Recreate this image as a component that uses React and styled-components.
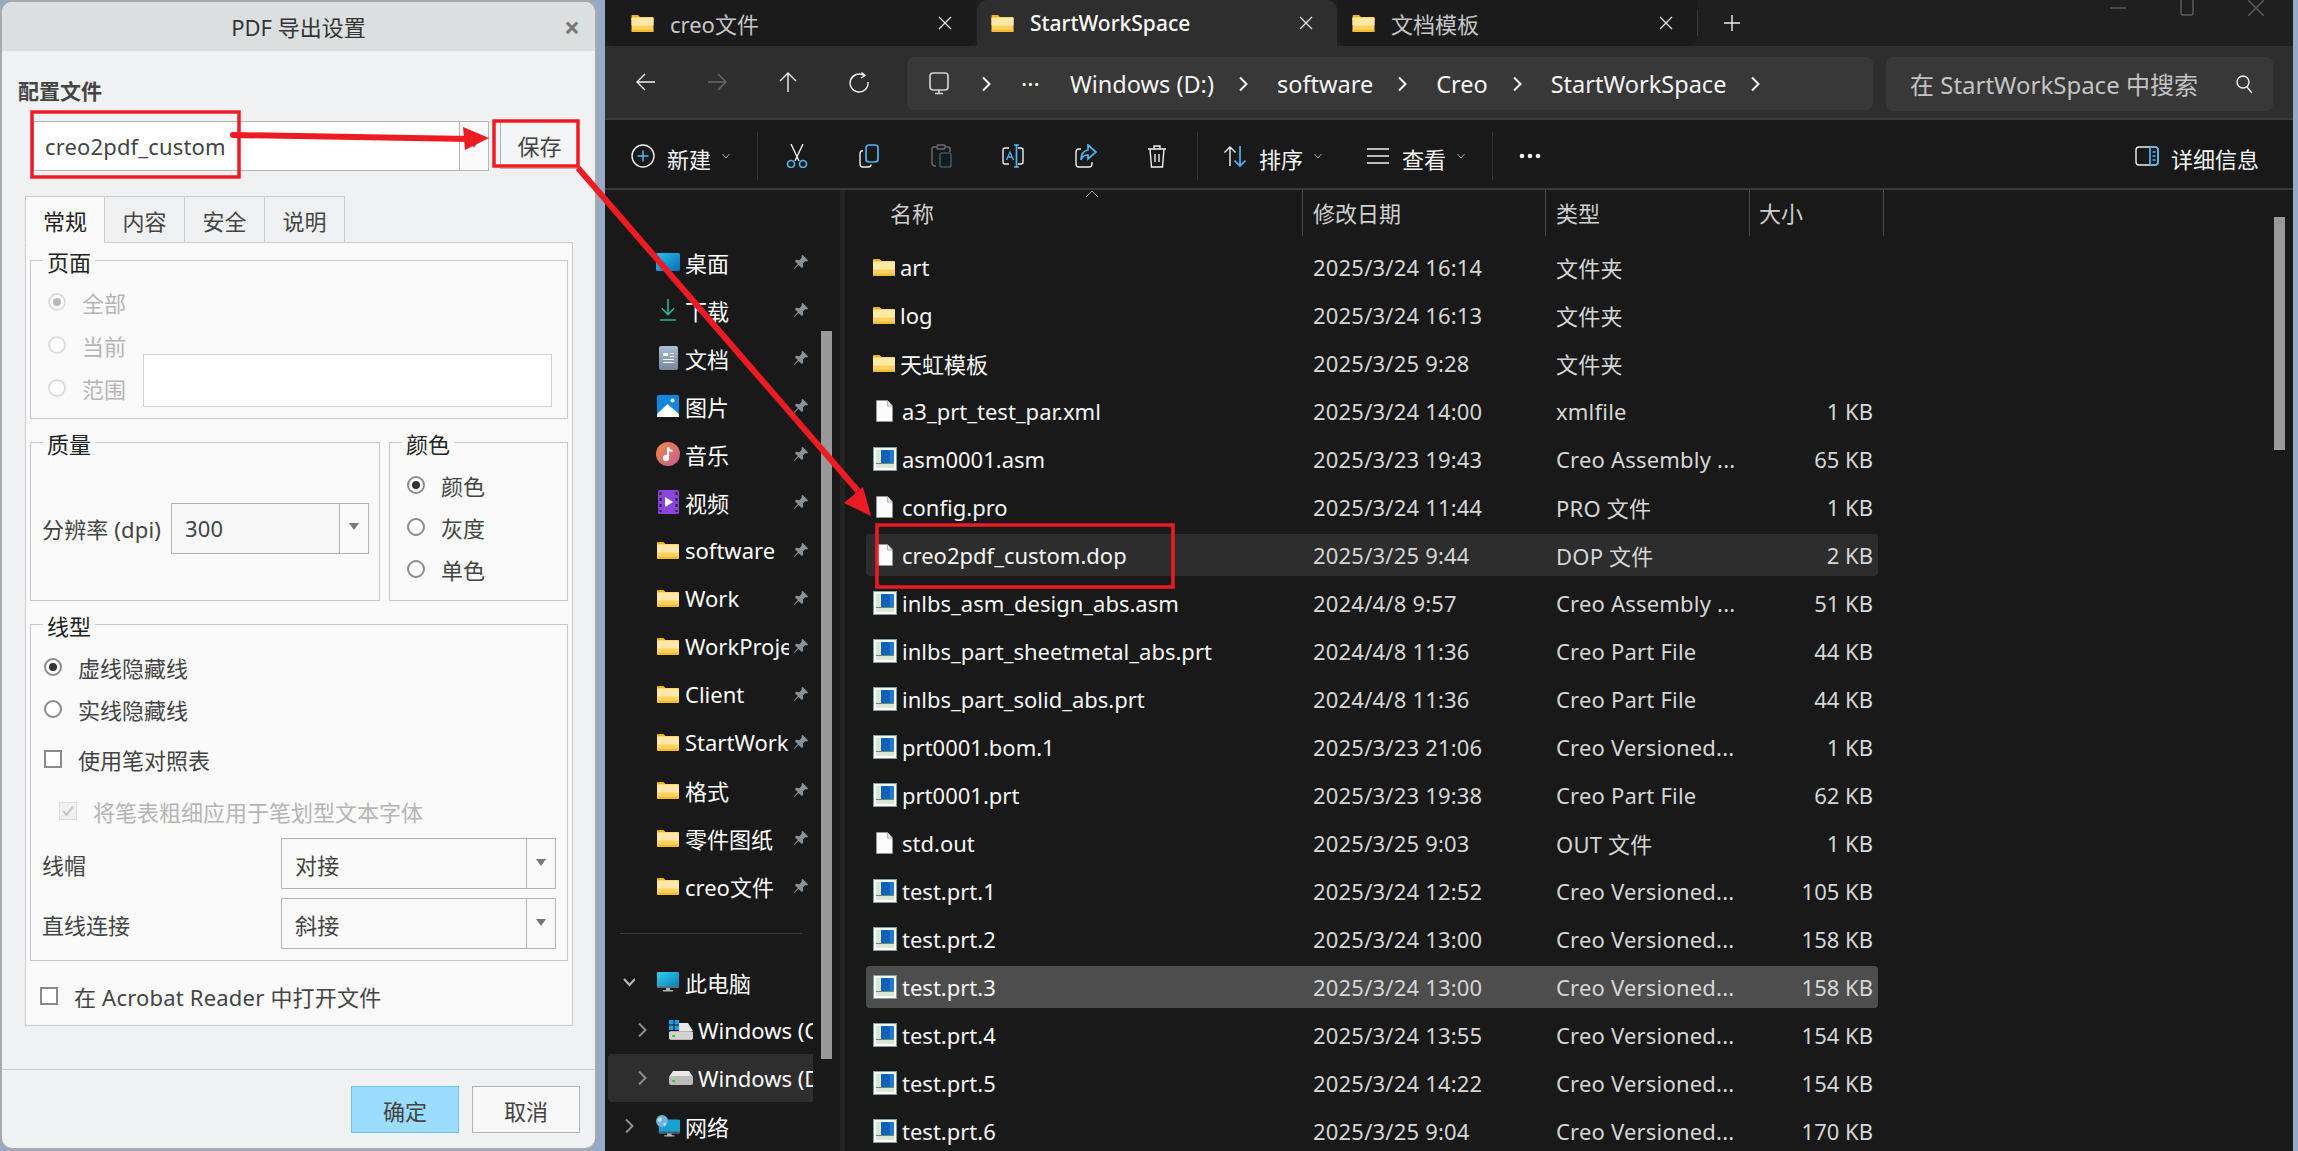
import React from 'react';
import styled, { createGlobalStyle } from 'styled-components';

const Global = createGlobalStyle`
  html, body { margin: 0; padding: 0; background: #96a9c7; }
  * { box-sizing: border-box; }
  body { font-family: "Noto Sans", "Noto Sans CJK SC", sans-serif; }
`;

const Page = styled.div`
  position: relative; display: flex; width: 2298px; height: 1151px; overflow: hidden; background: #96a9c7;
`;

/* ---------- dialog ---------- */
const Dialog = styled.div`
  width: 597px; height: 1150px; flex: none; margin-right: 8px; display: flex; flex-direction: column;
  background: #f0f1f3; border: 2px solid #a9a9a9; border-radius: 12px; color: #444; font-size: 22px; overflow: hidden;
`;
const TitleBar = styled.div`
  height: 49px; flex: none; background: #dcdfe0; display: grid; grid-template-columns: 1fr auto 1fr; align-items: center; color: #333;
`;
const Title = styled.div`grid-column: 2; font-size: 22px; line-height: 1;`;
const TitleClose = styled.div`justify-self: end; margin-right: 15px; color: #777; font-size: 28px; font-weight: 700; line-height: 1;`;
const ProfileLabel = styled.div`margin: 28px 0 0 16px; height: 24px; line-height: 24px; font-weight: 700; font-size: 21px; color: #444;`;
const ProfileRow = styled.div`display: flex; margin: 18px 0 0 31px; height: 50px;`;
const Combo = styled.div`
  display: flex; flex: none; width: ${p => p.$w}px; height: ${p => p.$h || 51}px; border: 1px solid #b4b4b4; background: ${p => p.$bg || '#fafafa'};
`;
const ComboText = styled.div`flex: 1; display: flex; align-items: center; padding-left: ${p => p.$pad || 13}px; color: #444; letter-spacing: .15px;`;
const ComboBtn = styled.div`
  width: 29px; flex: none; border-left: 1px solid #b4b4b4; display: flex; align-items: center; justify-content: center; background: #fafafa;
  &::after { content: ""; border-left: 5px solid transparent; border-right: 5px solid transparent; border-top: 7px solid #777; margin-top: -3px; }
`;
const SaveBtn = styled.div`
  margin-left: 11px; width: 79px; height: 48px; border: 1px solid #b4b4b4; background: #f4f5f6; display: flex; align-items: center; justify-content: center; color: #444;
`;
const TabStrip = styled.div`display: flex; margin: 25px 0 0 23px; height: 47px;`;
const PanelTab = styled.div`
  width: 80px; display: flex; align-items: center; justify-content: center; border: 1px solid #ccc; border-left-width: 0; color: ${p => p.$active ? '#222' : '#444'};
  background: ${p => p.$active ? '#fafafa' : '#eff0f2'}; border-bottom: ${p => p.$active ? '1px solid #fafafa' : '1px solid #ccc'}; position: relative; z-index: ${p => p.$active ? 1 : 0};
  &:first-child { border-left-width: 1px; }
`;
const Panel = styled.div`
  width: 548px; height: 784px; margin: -1px 0 0 23px; border: 1px solid #ccc; background: #fafafa; padding: 17px 4px 0; display: flex; flex-direction: column;
`;
const Group = styled.div`
  position: relative; flex: none; width: ${p => p.$w || 538}px; height: ${p => p.$h}px; border: 1px solid #c6c9ce; margin-top: ${p => p.$top || 0}px;
`;
const Legend = styled.div`
  position: absolute; top: -13px; left: 12px; padding: 0 4px; line-height: 28px; background: #fafafa; color: #222;
`;
const GroupRow = styled.div`display: flex; gap: 9px; margin-top: 23px;`;
const PageGrid = styled.div`
  display: grid; grid-template-columns: 95px 1fr; grid-auto-rows: 42px; row-gap: 1px; padding: 20px 15px 0 17px;
`;
const RangeField = styled.div`
  grid-column: 2; grid-row: 2 / 4; align-self: end; height: 53px; margin-bottom: 2px; background: #fff; border: 1px solid #d2d2d2;
`;
const OptionRow = styled.label`
  display: flex; align-items: center; height: 42px; margin-top: ${p => p.$top || 0}px; padding-left: ${p => p.$pad || 0}px; gap: 16px;
  color: ${p => p.$disabled ? '#b5b5b5' : '#444'}; white-space: nowrap; grid-column: 1;
`;
const RadioDot = styled.span`
  width: 18px; height: 18px; flex: none; border-radius: 50%; background: #fff; border: 2px solid ${p => p.$disabled ? '#dcdcdc' : '#8a8a8a'};
  display: flex; align-items: center; justify-content: center;
  &::after { content: ""; width: 8px; height: 8px; border-radius: 50%; background: ${p => p.$checked ? (p.$disabled ? '#b9b9b9' : '#333') : 'transparent'}; }
`;
const CheckBox = styled.span`
  width: 18px; height: 18px; flex: none; background: ${p => p.$disabled ? '#f0f0f0' : '#fff'}; border: ${p => p.$disabled ? '1px solid #ddd' : '2px solid #8a8a8a'};
  display: flex; align-items: center; justify-content: center;
`;
const QualityRow = styled.div`display: flex; align-items: center; height: 100%; padding: 13px 0 0 11px; gap: 8px;`;
const QualityLabel = styled.span`width: 121px; white-space: nowrap; letter-spacing: .15px;`;
const ColorList = styled.div`padding: 21px 0 0 17px;`;
const LineList = styled.div`padding: 21px 0 0 13px;`;
const StrokeRow = styled.div`
  display: flex; align-items: center; justify-content: space-between; height: 51px; margin: ${p => p.$top}px 0 0 -2px; padding-right: 11px;
`;
const AcrobatRow = styled(OptionRow)`margin-top: 14px; gap: 16px; padding-left: 10px; letter-spacing: .2px;`;
const DialogFooter = styled.div`
  margin-top: auto; height: 79px; flex: none; margin-bottom: 0; border-top: 1px solid #ccc; display: flex; justify-content: flex-end; gap: 13px; padding: 16px 15px 0 0;
`;
const FootBtn = styled.div`
  width: 108px; height: 47px; display: flex; align-items: center; justify-content: center; color: #444;
  background: ${p => p.$primary ? '#9bdcff' : '#f8f8f8'}; border: 1px solid ${p => p.$primary ? '#6cc4ef' : '#b4b4b4'};
`;

/* ---------- explorer ---------- */
const Explorer = styled.div`
  width: 1688px; flex: none; height: 1151px; display: flex; flex-direction: column; background: #191919; color: #fff; font-size: 22px;
`;
const TabBar = styled.div`height: 46px; flex: none; display: flex; background: #1f1f1f; align-items: stretch;`;
const WinTab = styled.div`
  width: ${p => p.$w}px; flex: none; display: flex; align-items: center; padding-left: 14px; padding-right: 24px; margin-right: 1px;
  background: ${p => p.$active ? '#2e2e2e' : '#1b1b1b'}; color: ${p => p.$active ? '#fff' : '#c6c6c6'}; font-weight: ${p => p.$active ? 500 : 400};
  font-size: ${p => p.$active ? 21 : 22}px; border-radius: ${p => p.$active ? '10px 10px 0 0' : '0 0 10px 10px'};
  &:first-child { padding-left: 26px; }
`;
const TabLabel = styled.span`margin: -1px 0 0 16px; white-space: nowrap;`;
const TabClose = styled.span`margin-left: auto; display: flex; color: #e6e6e6;`;
const NewTab = styled.div`
  display: flex; align-items: center; margin: 10px 0 10px -1px; border-left: 1px solid #3a3a3a; padding-left: 26px; color: #eee;
`;
const WinControls = styled.div`display: flex; margin-left: auto; align-items: flex-start; color: #5e5e5e; padding-right: 29px; gap: 53px;`;
const NavBar = styled.div`
  height: 74px; flex: none; background: #2e2e2e; border-bottom: 2px solid #3a3a3a; display: flex; align-items: center; padding: 3px 0 0 5px; font-size: 23.5px;
`;
const NavBtn = styled.div`width: 71px; flex: none; display: flex; justify-content: center; margin-top: -3px; color: ${p => p.$dim ? '#6a6a6a' : '#f2f2f2'};`;
const Address = styled.div`
  width: 966px; height: 53px; flex: none; margin-left: 13px; background: #383838; border-radius: 7px; display: flex; align-items: center; padding-left: 20px; color: #fff;
`;
const Crumb = styled.span`white-space: nowrap; color: #f5f5f5; margin-right: ${p => p.$r || 0}px;`;
const CrumbSep = styled.span`display: flex; width: 12px; flex: none; margin: 0 ${p => p.$r || 28}px 0 ${p => p.$l || 23}px; color: #f0f0f0;`;
const SearchBox = styled.div`
  width: 387px; height: 54px; flex: none; margin-left: 13px; background: #383838; border-radius: 7px; display: flex; align-items: center; padding: 0 20px 0 24px; color: #c4c4c4; white-space: nowrap; font-size: 24px;
`;
const SearchIconWrap = styled.span`margin-left: auto; display: flex; color: #d0d0d0;`;
const Toolbar = styled.div`
  height: 70px; flex: none; border-bottom: 2px solid #3a3a3a; display: flex; align-items: center; padding: 3px 34px 0 26px; background: #191919;
`;
const ToolText = styled.span`white-space: nowrap; margin: 4px 0 0 12px; color: #f4f4f4;`;
const ToolIcon = styled.span`display: flex; width: 24px; flex: none; margin-left: ${p => p.$l || 0}px;`;
const Caret = styled.span`display: flex; margin-left: 11px; color: #aaa;`;
const ToolSep = styled.span`width: 1px; height: 48px; flex: none; background: #333; margin: 0 ${p => p.$r || 0}px 0 ${p => p.$l || 0}px;`;
const ToolBtn = styled.span`width: 72px; flex: none; display: flex; justify-content: center; opacity: ${p => p.$dim ? 0.4 : 1};`;
const DetailsBtn = styled.div`margin-left: auto; display: flex; align-items: center;`;
const Body = styled.div`flex: 1; min-height: 0; display: flex; overflow: hidden;`;
const Sidebar = styled.div`position: relative; width: 235px; flex: none; padding-top: 48px; background: #191919;`;
const SideScroll = styled.div`position: absolute; left: 216px; top: 141px; width: 11px; height: 728px; background: #999;`;
const Splitter = styled.div`width: 5px; flex: none; background: #232323;`;
const SideItem = styled.div`display: flex; align-items: center; height: 48px; padding-left: 51px; gap: 5px;`;
const SideIcon = styled.span`display: flex; width: 24px; flex: none; justify-content: center;`;
const SideLabel = styled.span`width: 104px; overflow: hidden; white-space: nowrap; flex: none;`;
const SidePin = styled.span`display: flex; margin-left: -1px;`;
const SideDivider = styled.div`height: 1px; width: 182px; margin: 23px 0 24px 15px; background: #3c3c3c;`;
const TreeItem = styled.div`
  display: flex; align-items: center; height: 48px; width: 205px; margin-left: 3px; padding-left: ${p => p.$pad}px; overflow: hidden; white-space: nowrap;
  background: ${p => p.$selected ? '#2e2e2e' : 'transparent'}; border-radius: 4px 0 0 4px;
`;
const TreeChevron = styled.span`display: flex; width: 14px; flex: none; margin-right: 19px; color: ${p => p.$open ? '#bdbdbd' : '#8e8e8e'};`;
const TreeLabel = styled.span`margin-left: 5px;`;
const Main = styled.div`flex: 1; min-width: 0; display: flex; flex-direction: column; position: relative;`;
const HeaderRow = styled.div`display: flex; height: 46px; flex: none; color: #cfcfcf;`;
const HeadCell = styled.div`
  width: ${p => p.$w}px; flex: none; padding-left: ${p => p.$pad}px; padding-bottom: 3px; display: flex; align-items: center; border-right: 1px solid #4a4a4a; position: relative;
`;
const SortMark = styled.span`position: absolute; left: 240px; top: 0; display: flex; color: #aaa;`;
const Rows = styled.div`display: flex; flex-direction: column; padding: 10px 0 0 21px; gap: 6px;`;
const FileRow = styled.div`
  display: grid; grid-template-columns: 447px 243px 204px 1fr; flex: none; width: 1012px; height: 42px; align-items: center; border-radius: 4px;
  background: ${p => p.$hl === 'strong' ? '#4d4d4d' : p.$hl ? '#2d2d2d' : 'transparent'};
`;
const NameCell = styled.div`display: flex; align-items: center; gap: 5px; padding-left: 7px; color: #f6f6f6; white-space: nowrap;`;
const MetaCell = styled.div`color: #d6d6d6; white-space: nowrap; letter-spacing: .2px;`;
const SizeCell = styled.div`color: #d6d6d6; text-align: right; padding-right: 5px; white-space: nowrap;`;
const MainScroll = styled.div`position: absolute; left: 1429px; top: 27px; width: 11px; height: 233px; background: #999;`;
const Overlay = styled.svg`position: absolute; left: 0; top: 0; pointer-events: none;`;

/* ---------- icons ---------- */
const FolderIcon = ({ w = 22, h = 17 }) => (
  <svg width={w} height={h} viewBox="0 0 22 17">
    <path d="M0 1.2C0 .5.5 0 1.2 0h5.3l2 2H21a1 1 0 0 1 1 1v2H0z" fill="#f4b400" />
    <rect x="0" y="2.6" width="22" height="14.4" rx="1" fill="#fbd25f" />
    <rect x="0" y="2.6" width="22" height="8" rx="1" fill="#ffe9a8" />
    <rect x="0" y="14.8" width="22" height="2.2" rx="1" fill="#f3bb32" />
  </svg>
);
const DocIcon = () => (
  <svg width="24" height="22" viewBox="0 0 24 22">
    <path d="M3.5.5h11l5 5.5v15.5h-16z" fill="#fcfcfc" stroke="#9a9a9a" strokeWidth=".7" />
    <path d="M14.5.5v5.5h5" fill="#e4e4e4" stroke="#9a9a9a" strokeWidth=".7" />
  </svg>
);
const CreoIcon = () => (
  <svg width="24" height="24" viewBox="0 0 24 24">
    <rect x=".5" y=".5" width="23" height="23" fill="#fff" stroke="#7d9fa8" />
    <path d="M3 3h5v13h13v5H3z" fill="#dbe7d2" />
    <rect x="8" y="3" width="13" height="13" fill="#0e63b7" />
    <rect x="17" y="3" width="4" height="13" fill="#3b8ad6" opacity=".6" />
    <rect x="3" y="16" width="18" height="1" fill="#6a8a76" />
  </svg>
);
const Pin = () => (
  <svg width="16" height="16" viewBox="0 0 16 16" fill="#89909a">
    <path d="M9.6 .8 15.2 6.4 13.9 7.6 12.6 7 9.8 9.8 10.2 12.7 8.8 14.1 5.4 10.7 1.6 15 .9 14.3 4.8 10.1 1.7 7.1 3.1 5.7 6.2 6.2 8.9 3.4 8.4 2z" />
  </svg>
);
const DesktopIcon = () => (
  <svg width="24" height="18" viewBox="0 0 24 18">
    <defs><linearGradient id="dsk" x1="0" y1="0" x2="1" y2="1"><stop offset="0" stopColor="#25c0ee" /><stop offset="1" stopColor="#0e6cb2" /></linearGradient></defs>
    <rect width="24" height="18" rx="1.5" fill="url(#dsk)" />
  </svg>
);
const DownloadIcon = () => (
  <svg width="18" height="22" viewBox="0 0 18 22" fill="none" stroke="#22b796" strokeWidth="1.6">
    <path d="M9 0v15M3 9.5 9 15.5l6-6M1 21h16" />
  </svg>
);
const DocsIcon = () => (
  <svg width="19" height="24" viewBox="0 0 19 24">
    <defs><linearGradient id="dcs" x1="0" y1="0" x2="0" y2="1"><stop offset="0" stopColor="#a9bdd6" /><stop offset="1" stopColor="#76879d" /></linearGradient></defs>
    <rect width="19" height="24" rx="2" fill="url(#dcs)" />
    <path d="M4 7h5v3H4zM11 7h4v1h-4zM11 10h4v1h-4zM4 13h11v1H4zM4 16h11v1H4z" fill="#fff" />
  </svg>
);
const PicIcon = () => (
  <svg width="22" height="22" viewBox="0 0 22 22">
    <rect width="22" height="22" rx="1.5" fill="#0f86e2" />
    <circle cx="15.5" cy="5.5" r="2" fill="#fff" />
    <path d="M0 19 10.5 9 22 19v3H0z" fill="#fff" />
  </svg>
);
const MusicIcon = () => (
  <svg width="24" height="24" viewBox="0 0 24 24">
    <defs><linearGradient id="mus" x1="0" y1="0" x2="1" y2="1"><stop offset="0" stopColor="#f08a3c" /><stop offset="1" stopColor="#c85a9a" /></linearGradient></defs>
    <circle cx="12" cy="12" r="12" fill="url(#mus)" />
    <path d="M11 5h2.2c.4 2 1.9 2.7 3.3 3v2c-1.4 0-2.5-.5-3.3-1.200V16a3.200 3.200 0 1 1-2.200-3z" fill="#fff" />
  </svg>
);
const VideoIcon = () => (
  <svg width="21" height="24" viewBox="0 0 21 24">
    <rect width="21" height="24" rx="1.5" fill="#8a46d8" />
    <path d="M1.500 2h2v3h-2zM1.500 8h2v3h-2zM1.500 14h2v3h-2zM1.500 20h2v2h-2zM17.500 2h2v3h-2zM17.500 8h2v3h-2zM17.500 14h2v3h-2zM17.500 20h2v2h-2z" fill="#2a1a4a" />
    <path d="M7 7 15 12 7 17z" fill="#fff" />
  </svg>
);
const PcIcon = () => (
  <svg width="22" height="20" viewBox="0 0 22 20">
    <defs><linearGradient id="pc" x1="0" y1="0" x2="1" y2="1"><stop offset="0" stopColor="#2fd0ec" /><stop offset="1" stopColor="#0f78b8" /></linearGradient></defs>
    <rect width="22" height="16" rx="1" fill="url(#pc)" />
    <rect y="14.500" width="22" height="1.500" fill="#5d6a74" />
    <path d="M9 16h4v2h3v1.500H6V18h3z" fill="#aab4bb" />
  </svg>
);
const NetIcon = () => (
  <svg width="26" height="24" viewBox="0 0 26 24">
    <rect x="3" y="5" width="23" height="15" rx="1" fill="#17a2cf" />
    <rect x="3" y="18" width="23" height="2" fill="#4c5a66" />
    <path d="M12 20h5v2h3v1.500H9V22h3z" fill="#aab4bb" />
    <circle cx="6.500" cy="6.500" r="6.500" fill="#6db3e6" />
    <path d="M3 3c3-1 4 1 3 3S3 8 2 6zM8 9c2-1 3 0 3 1l-2 2z" fill="#cfe7c9" />
  </svg>
);
const DriveC = () => (
  <svg width="24" height="20" viewBox="0 0 24 20">
    <path d="M10 3h9l5 8H10z" fill="#e6e6e6" />
    <rect y="11" width="24" height="9" rx="2" fill="#b5b5b5" />
    <rect y="12" width="24" height="7" fill="#d2d2d2" />
    <rect x="3" y="15" width="3" height="2" fill="#2fd04a" />
    <path d="M0 0h4.500v4.500H0zM5.500 0H10v4.500H5.500zM0 5.500h4.500V10H0zM5.500 5.500H10V10H5.500z" fill="#1f9be8" />
  </svg>
);
const DriveD = () => (
  <svg width="24" height="14" viewBox="0 0 24 14">
    <path d="M4 0h16l4 6H0z" fill="#e8e8e8" />
    <rect y="5" width="24" height="9" rx="2" fill="#bcbcbc" />
    <rect x="3" y="9" width="3" height="2" fill="#2fd04a" />
  </svg>
);
const Chev = ({ dir = 'right', size = 12, sw = 2 }) => (
  <svg width={size} height={size + 4} viewBox="0 0 12 16" fill="none" stroke="currentColor" strokeWidth={sw}>
    {dir === 'right' ? <path d="M3 1.500 9.500 8 3 14.500" /> : <path d="M1 5l5.500 6L12 5" />}
  </svg>
);
const SmallCaret = () => (
  <svg width="8" height="6" viewBox="0 0 8 6" fill="none" stroke="currentColor" strokeWidth="1"><path d="M.5 1 4 5l3.500-4" /></svg>
);
const XMark = ({ s = 14 }) => (
  <svg width={s} height={s} viewBox="0 0 14 14" stroke="currentColor" strokeWidth="1.300" fill="none"><path d="M1 1l12 12M13 1 1 13" /></svg>
);
const Stroke = ({ w = 24, h = 24, vb = '0 0 24 24', children, color = '#f0f0f0', sw = 1.400 }) => (
  <svg width={w} height={h} viewBox={vb} fill="none" stroke={color} strokeWidth={sw}>{children}</svg>
);
const BLUE = '#4db5f0';
const BackI = () => <Stroke><path d="M21 12H4M11 4l-8 8 8 8" /></Stroke>;
const FwdI = () => <Stroke color="currentColor"><path d="M3 12h17M13 4l8 8-8 8" /></Stroke>;
const UpI = () => <Stroke><path d="M12 22V4M4 11l8-8 8 8" /></Stroke>;
const RefreshI = () => <Stroke><path d="M17 5.500A9 9 0 1 0 21 12M14.500 2.500 18 5.500l-4 2.500" /></Stroke>;
const PcLine = () => <Stroke sw={1.700} color="#cfcfcf"><rect x="3" y="1" width="18" height="17" rx="3" /><path d="M8 21.500h8M12 18v3.500" /></Stroke>;
const SearchI = () => <Stroke w={18} h={20} vb="0 0 18 20"><circle cx="8" cy="8" r="6" /><path d="M12 13l5 6" /></Stroke>;
const NewI = () => (
  <Stroke><circle cx="12" cy="12" r="11" /><path d="M12 6.500v11M6.500 12h11" stroke={BLUE} strokeWidth="1.600" /></Stroke>
);
const CutI = () => (
  <Stroke><path d="M6 0l8 17M18 0l-8 17" /><circle cx="6" cy="20" r="3.500" stroke={BLUE} strokeWidth="1.700" /><circle cx="18" cy="20" r="3.500" stroke={BLUE} strokeWidth="1.700" /></Stroke>
);
const CopyI = () => (
  <Stroke><rect x="9" y="1" width="12" height="17" rx="3" stroke={BLUE} strokeWidth="1.700" /><path d="M6 6.500c-2 .3-3 1.500-3 3V20c0 2 1.500 3 3 3h5c2 0 3-1 3-2.500" /></Stroke>
);
const PasteI = () => (
  <Stroke><path d="M7 3H5a2 2 0 0 0-2 2v15a3 3 0 0 0 3 2h1M17 3h2a2 2 0 0 1 2 2v3" /><rect x="8" y="1" width="8" height="4" rx="1" /><rect x="11" y="9" width="11" height="14" rx="2" stroke={BLUE} strokeWidth="1.700" /></Stroke>
);
const RenameI = () => (
  <Stroke><path d="M8 4H4a2 2 0 0 0-2 2v12a2 2 0 0 0 2 2h4M17 4h3a2 2 0 0 1 2 2v12a2 2 0 0 1-2 2h-3" /><path d="M15.500 1v22M13 1h5M13 23h5" stroke={BLUE} strokeWidth="1.700" /><path d="M5.500 16l3.500-8 3.500 8M7 13h4" stroke={BLUE} strokeWidth="1.300" /></Stroke>
);
const ShareI = () => (
  <Stroke><path d="M8 5H6a3 3 0 0 0-3 3v12a3 3 0 0 0 3 3h10a3 3 0 0 0 3-3v-2" /><path d="M15 1l8 7-8 7v-4c-4 0-6 2-7 5 0-5 2-9 7-10z" stroke={BLUE} strokeWidth="1.700" /></Stroke>
);
const TrashI = () => (
  <Stroke><path d="M3 5h18M9 5V2h6v3M5 5l1.500 18h11L19 5M10 10v8M14 10v8" /></Stroke>
);
const SortI = () => (
  <Stroke><path d="M7 22V3M1.500 8.500 7 3l5.500 5.500" /><path d="M17 2v20M11.500 16.500 17 22l5.500-5.500" stroke={BLUE} strokeWidth="1.700" /></Stroke>
);
const ViewI = () => <Stroke><path d="M1 5h22M1 12h22M1 19h22" /></Stroke>;
const DotsI = () => <svg width="24" height="6" viewBox="0 0 24 6" fill="#f0f0f0"><circle cx="4" cy="3" r="2.300" /><circle cx="12" cy="3" r="2.300" /><circle cx="20" cy="3" r="2.300" /></svg>;
const DetailsI = () => (
  <Stroke h={20} vb="0 0 24 20"><rect x="1" y="1" width="22" height="18" rx="3" /><path d="M15 1h5a3 3 0 0 1 3 3v12a3 3 0 0 1-3 3h-5zM17.500 6h3M17.500 10h3M17.500 14h3" stroke={BLUE} strokeWidth="1.700" /></Stroke>
);
const TickI = () => <svg width="14" height="14" viewBox="0 0 14 14" fill="none" stroke="#c4c4c4" strokeWidth="2"><path d="M2 7l3.500 4L12 2.500" /></svg>;

/* ---------- data ---------- */
const quick = [
  ['桌面', <DesktopIcon />], ['下载', <DownloadIcon />], ['文档', <DocsIcon />], ['图片', <PicIcon />], ['音乐', <MusicIcon />], ['视频', <VideoIcon />],
  ['software', <FolderIcon />], ['Work', <FolderIcon />], ['WorkProject', <FolderIcon />], ['Client', <FolderIcon />], ['StartWorkSpace', <FolderIcon />],
  ['格式', <FolderIcon />], ['零件图纸', <FolderIcon />], ['creo文件', <FolderIcon />],
];
const ASM = 'Creo Assembly ...'; const VER = 'Creo Versioned...'; const PART = 'Creo Part File';
const files = [
  ['art', 'f', '2025/3/24 16:14', '文件夹', ''], ['log', 'f', '2025/3/24 16:13', '文件夹', ''], ['天虹模板', 'f', '2025/3/25 9:28', '文件夹', ''],
  ['a3_prt_test_par.xml', 'd', '2025/3/24 14:00', 'xmlfile', '1 KB'], ['asm0001.asm', 'c', '2025/3/23 19:43', ASM, '65 KB'],
  ['config.pro', 'd', '2025/3/24 11:44', 'PRO 文件', '1 KB'], ['creo2pdf_custom.dop', 'd', '2025/3/25 9:44', 'DOP 文件', '2 KB', 'soft'],
  ['inlbs_asm_design_abs.asm', 'c', '2024/4/8 9:57', ASM, '51 KB'], ['inlbs_part_sheetmetal_abs.prt', 'c', '2024/4/8 11:36', PART, '44 KB'],
  ['inlbs_part_solid_abs.prt', 'c', '2024/4/8 11:36', PART, '44 KB'], ['prt0001.bom.1', 'c', '2025/3/23 21:06', VER, '1 KB'],
  ['prt0001.prt', 'c', '2025/3/23 19:38', PART, '62 KB'], ['std.out', 'd', '2025/3/25 9:03', 'OUT 文件', '1 KB'],
  ['test.prt.1', 'c', '2025/3/24 12:52', VER, '105 KB'], ['test.prt.2', 'c', '2025/3/24 13:00', VER, '158 KB'],
  ['test.prt.3', 'c', '2025/3/24 13:00', VER, '158 KB', 'strong'], ['test.prt.4', 'c', '2025/3/24 13:55', VER, '154 KB'],
  ['test.prt.5', 'c', '2025/3/24 14:22', VER, '154 KB'], ['test.prt.6', 'c', '2025/3/25 9:04', VER, '170 KB'],
];
const fileIcon = { f: <FolderIcon />, d: <DocIcon />, c: <CreoIcon /> };

const Annotations = () => (
  <Overlay width="2298" height="1151" viewBox="0 0 2298 1151">
    <g fill="none" stroke="#ed1c24" strokeWidth="3.500">
      <rect x="32" y="112" width="207" height="65" />
      <rect x="494" y="121" width="84" height="45" />
      <rect x="877" y="525" width="296" height="62" />
    </g>
    <path d="M233 135 470 139" stroke="#ed1c24" strokeWidth="6" strokeLinecap="round" />
    <polygon points="489,138 463,127 465,150" fill="#ed1c24" />
    <path d="M578 168 858 491" stroke="#ed1c24" strokeWidth="6" />
    <polygon points="871,516 844,503 863,487" fill="#ed1c24" />
  </Overlay>
);

export default function App() {
  return (
    <Page>
      <Global />
      <Dialog>
        <TitleBar>
          <Title>PDF 导出设置</Title>
          <TitleClose>×</TitleClose>
        </TitleBar>
        <ProfileLabel>配置文件</ProfileLabel>
        <ProfileRow>
          <Combo $w={456} $h={50} $bg="#fff"><ComboText $pad={11}>creo2pdf_custom</ComboText><ComboBtn /></Combo>
          <SaveBtn>保存</SaveBtn>
        </ProfileRow>
        <TabStrip>
          <PanelTab $active>常规</PanelTab>
          <PanelTab>内容</PanelTab>
          <PanelTab>安全</PanelTab>
          <PanelTab>说明</PanelTab>
        </TabStrip>
        <Panel>
          <Group $h={159}>
            <Legend>页面</Legend>
            <PageGrid>
              <OptionRow $disabled><RadioDot $checked $disabled />全部</OptionRow>
              <RangeField />
              <OptionRow $disabled><RadioDot $disabled />当前</OptionRow>
              <OptionRow $disabled><RadioDot $disabled />范围</OptionRow>
            </PageGrid>
          </Group>
          <GroupRow>
            <Group $w={350} $h={159}>
              <Legend>质量</Legend>
              <QualityRow>
                <QualityLabel>分辨率 (dpi)</QualityLabel>
                <Combo $w={198} $bg="#f8f8f8"><ComboText>300</ComboText><ComboBtn /></Combo>
              </QualityRow>
            </Group>
            <Group $w={179} $h={159}>
              <Legend>颜色</Legend>
              <ColorList>
                <OptionRow><RadioDot $checked />颜色</OptionRow>
                <OptionRow><RadioDot />灰度</OptionRow>
                <OptionRow><RadioDot />单色</OptionRow>
              </ColorList>
            </Group>
          </GroupRow>
          <Group $h={337} $top={23}>
            <Legend>线型</Legend>
            <LineList>
              <OptionRow><RadioDot $checked />虚线隐藏线</OptionRow>
              <OptionRow><RadioDot />实线隐藏线</OptionRow>
              <OptionRow $top={8}><CheckBox />使用笔对照表</OptionRow>
              <OptionRow $top={10} $pad={15} $disabled><CheckBox $disabled><TickI /></CheckBox>将笔表粗细应用于笔划型文本字体</OptionRow>
              <StrokeRow $top={6}>线帽<Combo $w={275}><ComboText>对接</ComboText><ComboBtn /></Combo></StrokeRow>
              <StrokeRow $top={9}>直线连接<Combo $w={275}><ComboText>斜接</ComboText><ComboBtn /></Combo></StrokeRow>
            </LineList>
          </Group>
          <AcrobatRow><CheckBox />在 Acrobat Reader 中打开文件</AcrobatRow>
        </Panel>
        <DialogFooter>
          <FootBtn $primary>确定</FootBtn>
          <FootBtn>取消</FootBtn>
        </DialogFooter>
      </Dialog>

      <Explorer>
        <TabBar>
          <WinTab $w={371}><FolderIcon w={23} h={17} /><TabLabel>creo文件</TabLabel><TabClose><XMark /></TabClose></WinTab>
          <WinTab $w={360} $active><FolderIcon w={23} h={17} /><TabLabel>StartWorkSpace</TabLabel><TabClose><XMark /></TabClose></WinTab>
          <WinTab $w={359}><FolderIcon w={23} h={17} /><TabLabel>文档模板</TabLabel><TabClose><XMark /></TabClose></WinTab>
          <NewTab><Stroke w={16} h={16} vb="0 0 16 16" color="#eee"><path d="M8 0v16M0 8h16" /></Stroke></NewTab>
          <WinControls>
            <Stroke w={16} h={16} vb="0 0 16 16" color="currentColor"><path d="M0 8h16" /></Stroke>
            <Stroke w={16} h={16} vb="0 0 16 16" color="currentColor"><rect x="2" y="-4" width="12" height="19" rx="2" /></Stroke>
            <Stroke w={16} h={16} vb="0 0 16 16" color="currentColor"><path d="M0 0l16 16M16 0 0 16" /></Stroke>
          </WinControls>
        </TabBar>
        <NavBar>
          <NavBtn><BackI /></NavBtn>
          <NavBtn $dim><FwdI /></NavBtn>
          <NavBtn><UpI /></NavBtn>
          <NavBtn><RefreshI /></NavBtn>
          <Address>
            <PcLine />
            <CrumbSep $l={29} $r={29}><Chev /></CrumbSep>
            <Crumb $r={30}>···</Crumb>
            <Crumb>Windows (D:)</Crumb>
            <CrumbSep><Chev /></CrumbSep>
            <Crumb>software</Crumb>
            <CrumbSep><Chev /></CrumbSep>
            <Crumb>Creo</Crumb>
            <CrumbSep><Chev /></CrumbSep>
            <Crumb>StartWorkSpace</Crumb>
            <CrumbSep><Chev /></CrumbSep>
          </Address>
          <SearchBox>在 StartWorkSpace 中搜索<SearchIconWrap><SearchI /></SearchIconWrap></SearchBox>
        </NavBar>
        <Toolbar>
          <ToolIcon><NewI /></ToolIcon>
          <ToolText>新建</ToolText>
          <Caret><SmallCaret /></Caret>
          <ToolSep $l={27} $r={3} />
          <ToolBtn><CutI /></ToolBtn>
          <ToolBtn><CopyI /></ToolBtn>
          <ToolBtn $dim><PasteI /></ToolBtn>
          <ToolBtn><RenameI /></ToolBtn>
          <ToolBtn><ShareI /></ToolBtn>
          <ToolBtn><TrashI /></ToolBtn>
          <ToolSep $l={4} />
          <ToolIcon $l={25}><SortI /></ToolIcon>
          <ToolText>排序</ToolText>
          <Caret><SmallCaret /></Caret>
          <ToolIcon $l={44}><ViewI /></ToolIcon>
          <ToolText>查看</ToolText>
          <Caret><SmallCaret /></Caret>
          <ToolSep $l={27} />
          <ToolIcon $l={25}><DotsI /></ToolIcon>
          <DetailsBtn><ToolIcon><DetailsI /></ToolIcon><ToolText>详细信息</ToolText></DetailsBtn>
        </Toolbar>
        <Body>
          <Sidebar>
            {quick.map(([name, icon]) => (
              <SideItem key={name}>
                <SideIcon>{icon}</SideIcon>
                <SideLabel>{name}</SideLabel>
                <SidePin><Pin /></SidePin>
              </SideItem>
            ))}
            <SideDivider />
            <TreeItem $pad={15}><TreeChevron $open><Chev dir="down" size={12} /></TreeChevron><SideIcon><PcIcon /></SideIcon><TreeLabel>此电脑</TreeLabel></TreeItem>
            <TreeItem $pad={28}><TreeChevron><Chev /></TreeChevron><SideIcon><DriveC /></SideIcon><TreeLabel>Windows (C:)</TreeLabel></TreeItem>
            <TreeItem $pad={28} $selected><TreeChevron><Chev /></TreeChevron><SideIcon><DriveD /></SideIcon><TreeLabel>Windows (D:)</TreeLabel></TreeItem>
            <TreeItem $pad={15}><TreeChevron><Chev /></TreeChevron><SideIcon><NetIcon /></SideIcon><TreeLabel>网络</TreeLabel></TreeItem>
            <SideScroll />
          </Sidebar>
          <Splitter />
          <Main>
            <HeaderRow>
              <HeadCell $w={458} $pad={45}>名称<SortMark><Stroke w={14} h={8} vb="0 0 14 8" color="currentColor" sw={1}><path d="M1 7l6-6 6 6" /></Stroke></SortMark></HeadCell>
              <HeadCell $w={243} $pad={10}>修改日期</HeadCell>
              <HeadCell $w={204} $pad={10}>类型</HeadCell>
              <HeadCell $w={134} $pad={9}>大小</HeadCell>
            </HeaderRow>
            <Rows>
              {files.map(([name, kind, date, type, size, hl]) => (
                <FileRow key={name} $hl={hl}>
                  <NameCell>{fileIcon[kind]}{name}</NameCell>
                  <MetaCell>{date}</MetaCell>
                  <MetaCell>{type}</MetaCell>
                  <SizeCell>{size}</SizeCell>
                </FileRow>
              ))}
            </Rows>
            <MainScroll />
          </Main>
        </Body>
      </Explorer>
      <Annotations />
    </Page>
  );
}
